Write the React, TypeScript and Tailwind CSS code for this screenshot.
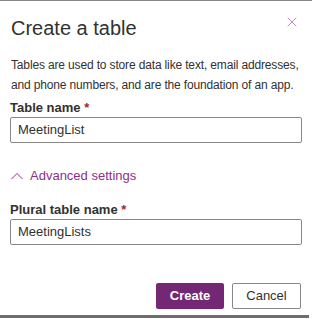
import { X } from 'lucide-react'

const font = { fontFamily: '"Liberation Sans", Arial, sans-serif' }

function Field({ label, value }: { label: string; value: string }) {
  return (
    <div>
      <div className="text-[13px] font-semibold text-[#323130] leading-[18px]">
        {label} <span className="text-[#a4262c]">*</span>
      </div>
      <div className="h-[26px] border border-[#8a8886] rounded-[2px] px-[7px] flex items-center text-[13px] text-[#323130]">
        {value}
      </div>
    </div>
  )
}

export default function App() {
  return (
    <div className="w-[312px] h-[319px] bg-white border-t border-[#8a8886] overflow-hidden" style={font}>
      <div className="px-[10px] relative">
        <button className="absolute right-[12px] top-[13px] text-[#b05ab0]">
          <X size={16} strokeWidth={1.1} />
        </button>
        <h1 className="pt-[13px] pl-[1px] text-[20px] leading-[28px] text-[#323130]">Create a table</h1>
        <p className="mt-[13px] pl-[1px] whitespace-nowrap text-[12px] tracking-[-0.15px] leading-[20px] text-[#323130]">
          Tables are used to store data like text, email addresses,
          <br />
          and phone numbers, and are the foundation of an app.
        </p>
        <div className="mt-[4px]">
          <Field label="Table name" value="MeetingList" />
        </div>
        <div className="mt-[24px] h-[18px] pl-[1px] flex items-center gap-[7px] text-[13px] text-[#8b2f8b]">
          <svg width="12" height="8" viewBox="0 0 12 8" fill="none" stroke="currentColor" strokeWidth="1">
            <polyline points="0.5,7 6,1.5 11.5,7" />
          </svg>
          <span>Advanced settings</span>
        </div>
        <div className="mt-[16px]">
          <Field label="Plural table name" value="MeetingLists" />
        </div>
        <div className="mt-[38px] flex justify-end gap-[8px] pr-[1px]">
          <button className="w-[68px] h-[26px] rounded-[2px] bg-[#742774] text-white text-[13px] font-semibold">Create</button>
          <button className="w-[69px] h-[26px] rounded-[2px] border border-[#8a8886] text-[#323130] text-[13px]">Cancel</button>
        </div>
      </div>
      <div className="mt-[6px] h-[3px] mr-[3px] bg-[#6e6e6e]" />
    </div>
  )
}
